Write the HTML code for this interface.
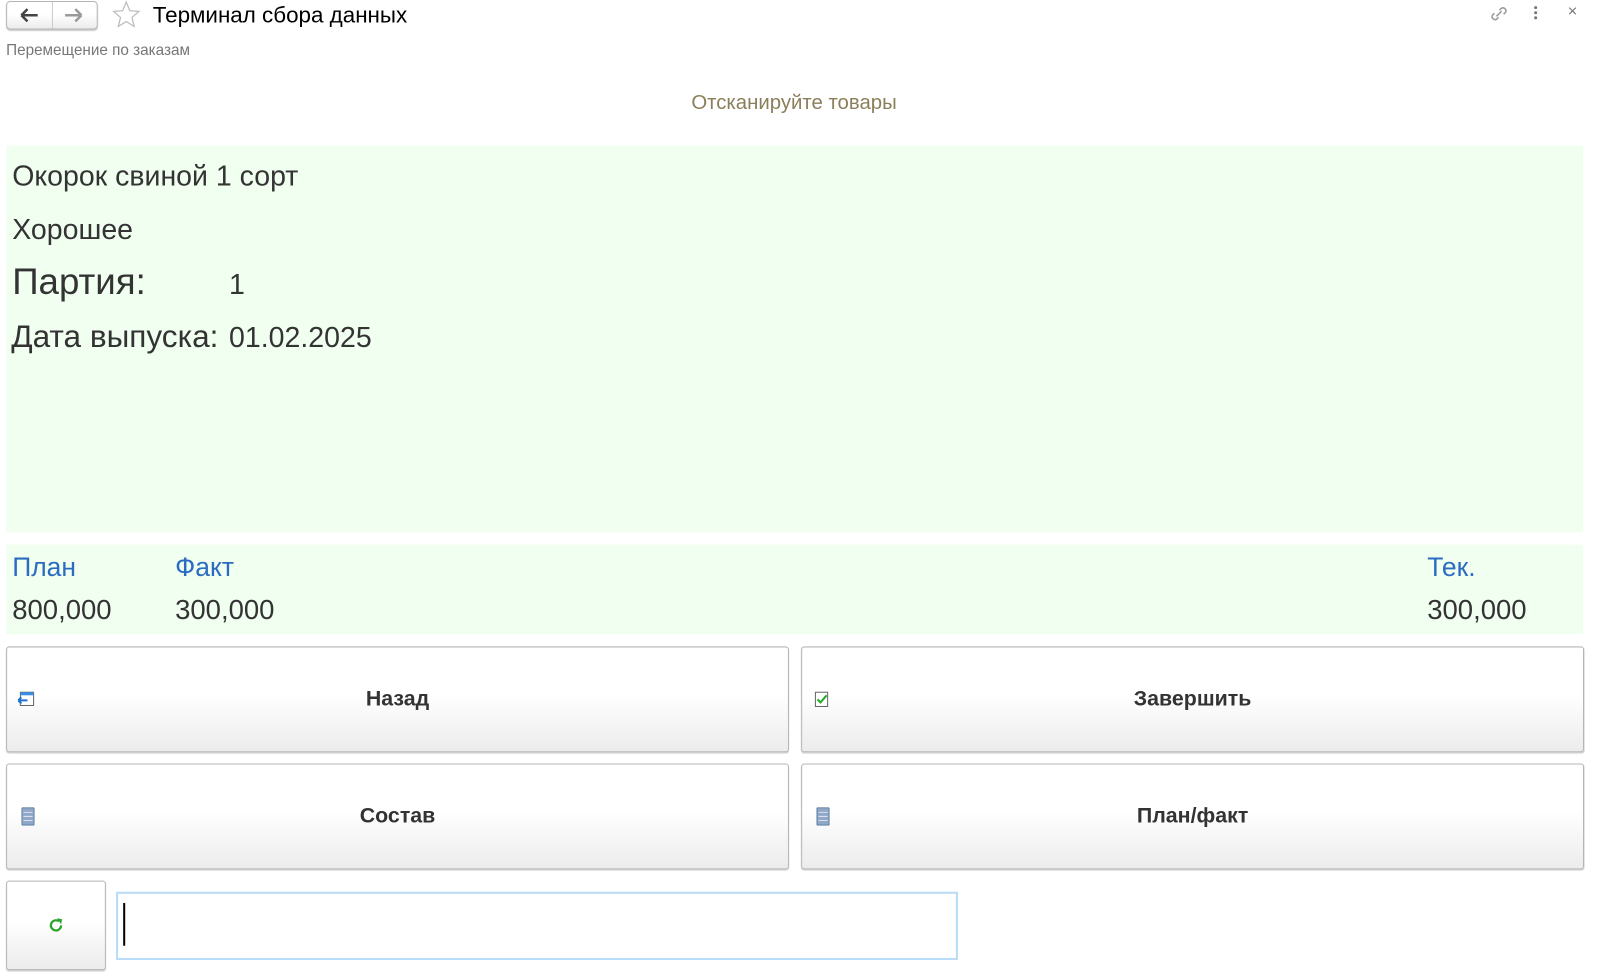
<!DOCTYPE html><html><head><meta charset="utf-8"><style>
body{margin:0;width:1597px;height:980px;background:#fff;font-family:"Liberation Sans",sans-serif;position:relative;overflow:hidden}
#w{position:absolute;left:0;top:0;width:1560px;height:958px;transform:scale(1.018);transform-origin:0 0}
.a{position:absolute;white-space:nowrap}
.btn{position:absolute;border:1px solid #b5b5b5;border-radius:3px;background:linear-gradient(#fff 45%,#ececec);box-shadow:0 1px 1px #ccc;box-sizing:border-box}
.bt{position:absolute;left:0;right:0;top:50%;transform:translateY(-50%);text-align:center;font-weight:bold;font-size:21px;color:#333}
</style></head><body><div id="w">
<div class="btn" style="left:6px;top:1px;width:90px;height:28px;border-radius:4px"></div>
<div class="a" style="left:51px;top:2px;width:1px;height:26px;background:#ccc"></div>
<svg class="a" style="left:19px;top:7px" width="20" height="16"><path d="M2 8h16M2 8l6-6M2 8l6 6" stroke="#444" stroke-width="2.5" fill="none"/></svg>
<svg class="a" style="left:62px;top:7px" width="20" height="16"><path d="M2 8h16M18 8l-6-6M18 8l-6 6" stroke="#999" stroke-width="2.5" fill="none"/></svg>
<svg class="a" style="left:109px;top:0" width="30" height="30"><path d="M15 2l3.5 8.5 9 .7-6.9 5.9 2.2 8.9L15 21.2 7.2 26l2.2-8.9L2.5 11.2l9-.7z" fill="none" stroke="#bbb" stroke-width="1.2"/></svg>
<div class="a" style="left:150px;top:2px;font-size:22px;color:#000">Терминал сбора данных</div>
<svg class="a" style="left:1462px;top:4px" width="20" height="20"><path d="M8 12l5-5M6 9l-2 2a3 3 0 0 0 4 4l2-2M11 6l2-2a3 3 0 0 1 4 4l-2 2" stroke="#999" stroke-width="1.5" fill="none"/></svg>
<div class="a" style="left:1507px;top:6px;width:3px;height:3px;background:#777;border-radius:2px;box-shadow:0 5px #777,0 10px #777"></div>
<div class="a" style="left:1540px;top:3px;font-size:16px;color:#777">×</div>
<div class="a" style="left:6px;top:41px;font-size:15px;color:#777">Перемещение по заказам</div>
<div class="a" style="left:0;width:1560px;text-align:center;top:90px;font-size:20px;color:#8a7f5a">Отсканируйте товары</div>
<div class="a" style="left:6px;top:143px;width:1549px;height:380px;background:#f0fff0"></div>
<div class="a" style="left:12px;top:157px;font-size:28px;color:#333">Окорок свиной 1 сорт</div>
<div class="a" style="left:12px;top:210px;font-size:28px;color:#333">Хорошее</div>
<div class="a" style="left:12px;top:256px;font-size:36px;color:#333">Партия:</div>
<div class="a" style="left:225px;top:264px;font-size:28px;color:#333">1</div>
<div class="a" style="left:11px;top:313px;font-size:31px;color:#333">Дата выпуска:</div>
<div class="a" style="left:225px;top:316px;font-size:28px;color:#333">01.02.2025</div>
<div class="a" style="left:6px;top:535px;width:1549px;height:88px;background:#f0fff0"></div>
<div class="a" style="left:12px;top:542px;font-size:26px;color:#2b6cc0">План</div>
<div class="a" style="left:172px;top:542px;font-size:26px;color:#2b6cc0">Факт</div>
<div class="a" style="left:1402px;top:542px;font-size:26px;color:#2b6cc0">Тек.</div>
<div class="a" style="left:12px;top:584px;font-size:27px;color:#333">800,000</div>
<div class="a" style="left:172px;top:584px;font-size:27px;color:#333">300,000</div>
<div class="a" style="left:1402px;top:584px;font-size:27px;color:#333">300,000</div>
<div class="btn" style="left:6px;top:635px;width:769px;height:104px"><div class="bt">Назад</div>
<svg class="a" style="left:10px;top:43px" width="18" height="16"><rect x="3" y="1" width="13" height="13" fill="#fff" stroke="#666"/><rect x="3" y="1" width="13" height="3" fill="#3a8ee6"/><path d="M1 9h9M1 9l3-3M1 9l3 3" stroke="#1e6fd0" stroke-width="2" fill="none"/></svg></div>
<div class="btn" style="left:787px;top:635px;width:769px;height:104px"><div class="bt">Завершить</div>
<svg class="a" style="left:12px;top:43px" width="16" height="16"><rect x="1" y="1" width="12" height="14" fill="#fff" stroke="#666"/><path d="M3 8l3 3 6-7" stroke="#2a2" stroke-width="2" fill="none"/></svg></div>
<div class="btn" style="left:6px;top:750px;width:769px;height:104px"><div class="bt">Состав</div>
<svg class="a" style="left:14px;top:42px" width="13" height="18"><rect x="0.5" y="0.5" width="12" height="17" rx="1" fill="#8fa8c8" stroke="#5a7aa0"/><path d="M2 5h9M2 9h9M2 13h9" stroke="#dde" /></svg></div>
<div class="btn" style="left:787px;top:750px;width:769px;height:104px"><div class="bt">План/факт</div>
<svg class="a" style="left:14px;top:42px" width="13" height="18"><rect x="0.5" y="0.5" width="12" height="17" rx="1" fill="#8fa8c8" stroke="#5a7aa0"/><path d="M2 5h9M2 9h9M2 13h9" stroke="#dde" /></svg></div>
<div class="btn" style="left:6px;top:865px;width:98px;height:88px">
<svg class="a" style="left:39px;top:34px" width="18" height="18"><path d="M14 9a5 5 0 1 1-2-4" stroke="#2aa52a" stroke-width="2.2" fill="none"/><path d="M10 2l5 1-1 5z" fill="#2aa52a"/></svg></div>
<div class="a" style="left:114px;top:876px;width:827px;height:67px;border:2px solid #b8dcf8;box-sizing:border-box;background:#fff"></div>
<div class="a" style="left:121px;top:887px;width:2px;height:42px;background:#000"></div>
</div></body></html>
